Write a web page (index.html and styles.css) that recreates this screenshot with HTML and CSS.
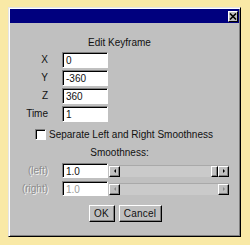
FILE: index.html
```html
<!DOCTYPE html>
<html>
<head>
<meta charset="utf-8">
<link rel="stylesheet" href="styles.css">
</head>
<body>
<div class="window">
  <div class="titlebar">
    <div class="close">
      <svg width="8" height="7" viewBox="0 0 8 7"><path d="M1 0.5 L7 6.5 M7 0.5 L1 6.5" stroke="#000" stroke-width="1.6"/></svg>
    </div>
  </div>
  <div class="content">
    <div class="heading">Edit Keyframe</div>
    <div class="form">
      <label class="lbl">X</label><div class="field">0</div>
      <label class="lbl">Y</label><div class="field">-360</div>
      <label class="lbl">Z</label><div class="field">360</div>
      <label class="lbl">Time</label><div class="field">1</div>
    </div>
    <div class="check-row">
      <span class="checkbox"></span>
      <span class="check-text">Separate Left and Right Smoothness</span>
    </div>
    <div class="heading sub">Smoothness:</div>
    <div class="smooth">
      <label class="lbl disabled">(left)</label>
      <div class="field">1.0</div>
      <div class="scrollbar">
        <div class="arrow left"><span class="tri tl"></span></div>
        <div class="track"></div>
        <div class="thumb"></div>
        <div class="arrow right"><span class="tri tr"></span></div>
      </div>
      <label class="lbl disabled">(right)</label>
      <div class="field dim">1.0</div>
      <div class="scrollbar off">
        <div class="arrow left"><span class="tri tl"></span></div>
        <div class="track"></div>
        <div class="arrow right"><span class="tri tr"></span></div>
      </div>
    </div>
    <div class="buttons">
      <button class="btn ok">OK</button>
      <button class="btn cancel">Cancel</button>
    </div>
  </div>
</div>
</body>
</html>
```
FILE: styles.css
```css
* { box-sizing: border-box; }
html, body { margin: 0; padding: 0; }
body {
  width: 250px;
  height: 245px;
  background: #f9e9a6;
  font-family: "Liberation Sans", Arial, sans-serif;
  font-size: 10px;
  color: #111;
  overflow: hidden;
  padding: 7px 0 0 8px;
}
.window {
  width: 233px;
  height: 230px;
  background: #c0c0c0;
  border: 1px solid;
  border-color: #e4e4e4 #000 #000 #e4e4e4;
  box-shadow: inset 1px 1px 0 #fff, inset -1px -1px 0 #808080;
  padding: 1px;
  display: flex;
  flex-direction: column;
}
.titlebar {
  height: 14px;
  background: #00007e;
  display: flex;
  justify-content: flex-end;
  align-items: center;
  padding-right: 1px;
}
.close {
  width: 10px;
  height: 11px;
  background: #c0c0c0;
  border: 1px solid;
  border-color: #fff #000 #000 #fff;
  display: flex;
  align-items: center;
  justify-content: center;
}
.close svg { display: block; }
.content {
  flex: 1;
  display: flex;
  flex-direction: column;
}
.heading {
  text-align: center;
  padding-right: 10px;
  line-height: 12px;
  margin-top: 14px;
}
.form {
  display: grid;
  grid-template-columns: 52px 46px;
  row-gap: 2px;
  margin-top: 3px;
}
.lbl {
  text-align: right;
  line-height: 16px;
  white-space: nowrap;
  padding-right: 14px;
}
.field {
  height: 16px;
  background: #fff;
  border: 1px solid;
  border-color: #808080 #fff #fff #808080;
  box-shadow: inset 1px 1px 0 #000;
  padding: 2px 0 0 3px;
  line-height: 11px;
}
.check-row {
  display: flex;
  align-items: center;
  margin: 7px 0 0 25px;
  height: 11px;
}
.checkbox {
  width: 11px;
  height: 11px;
  background: #fff;
  border: 1px solid;
  border-color: #808080 #fff #fff #808080;
  box-shadow: inset 1px 1px 0 #000;
}
.check-text { margin-left: 3px; }
.heading.sub { margin-top: 7px; }
.smooth {
  display: grid;
  grid-template-columns: 52px 46px 121px;
  row-gap: 3px;
  margin-top: 4px;
  align-items: center;
}
.smooth .field { height: 15px; }
.smooth .lbl { line-height: 15px; }
.lbl.disabled {
  color: #8c8c8c;
  text-shadow: 1px 1px 0 #f4f4f4;
}
.field.dim { color: #9a9a9a; }
.scrollbar {
  height: 12px;
  display: flex;
  background: #cacaca;
  border-top: 1px solid #a9a9a9;
  margin-left: 1px;
}
.track { flex: 1; }
.arrow, .thumb {
  width: 11px;
  height: 11px;
  background: #c0c0c0;
  border: 1px solid;
  border-color: #fff #000 #000 #fff;
  box-shadow: inset -1px -1px 0 #808080;
  display: flex;
  align-items: center;
  justify-content: center;
}
.thumb { width: 7px; }
.tri {
  width: 0;
  height: 0;
  border-top: 2px solid transparent;
  border-bottom: 2px solid transparent;
}
.tl { border-right: 2px solid #000; }
.tr { border-left: 2px solid #000; }
.off .tl { border-right-color: #8a8a8a; }
.off .tr { border-left-color: #8a8a8a; }
.buttons {
  display: flex;
  justify-content: center;
  gap: 4px;
  margin-top: 9px;
  padding-left: 1px;
}
.btn {
  height: 17px;
  font-family: "Liberation Sans", Arial, sans-serif;
  font-size: 10px;
  color: #111;
  background: #c0c0c0;
  border: 1px solid;
  border-color: #fff #000 #000 #fff;
  box-shadow: inset -1px -1px 0 #808080;
  padding: 0;
  margin: 0;
  letter-spacing: 0.2px;
}
.ok { width: 26px; }
.cancel { width: 43px; }
```
